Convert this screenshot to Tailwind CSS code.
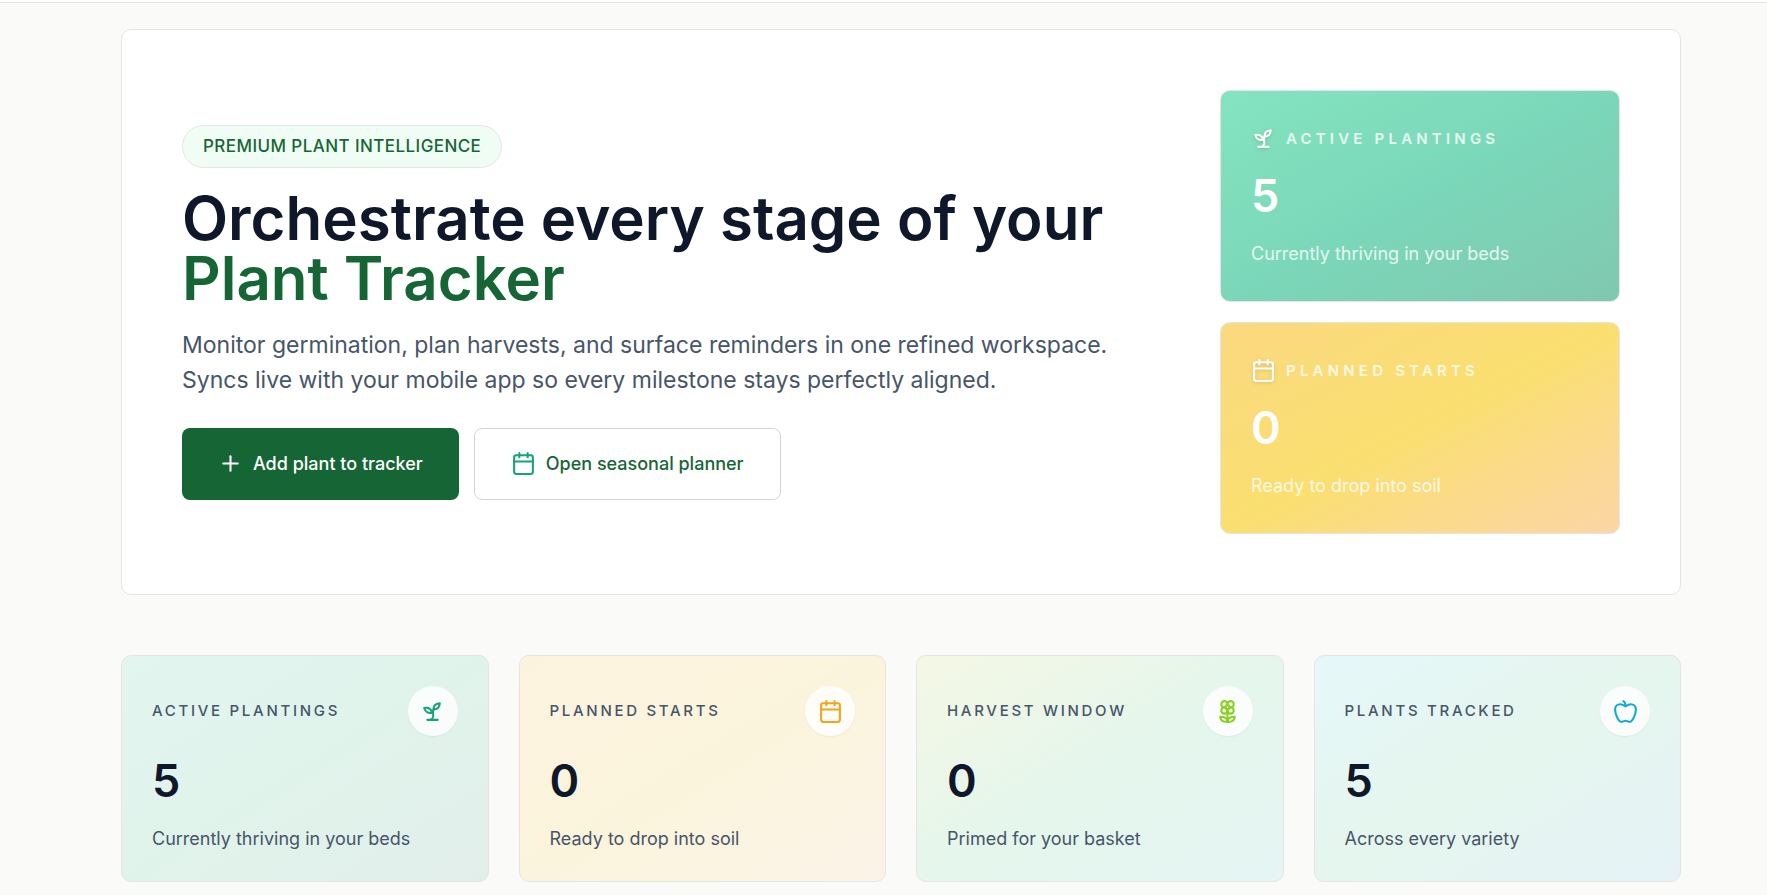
<!DOCTYPE html>
<html lang="en">
<head>
    <meta charset="UTF-8">
    <meta name="viewport" content="width=device-width, initial-scale=1.0">
    <title>Plant Tracker</title>
    <script src="https://cdn.jsdelivr.net/npm/@tailwindcss/browser@4"></script>
</head>
<body class="bg-[#fafaf9] font-['Inter',sans-serif] text-[#0f172a]">
    <!-- Shared icons -->
    <svg class="hidden" aria-hidden="true">
        <symbol id="icon-sprout" viewBox="0 0 24 24">
            <path d="M7 20h10"/>
            <path d="M10 20c5.5-2.5.8-6.4 3-10"/>
            <path d="M9.5 9.4c1.1.8 1.8 2.2 2.3 3.7-2 .4-3.5.4-4.8-.3-1.2-.6-2.3-1.9-3-4.2 2.8-.5 4.4 0 5.5.8z"/>
            <path d="M14.1 6a7 7 0 0 0-1.1 4c1.9-.1 3.3-.6 4.3-1.4 1-1 1.6-2.3 1.7-4.6-2.7.1-4 1-4.9 2z"/>
        </symbol>
        <symbol id="icon-calendar" viewBox="0 0 24 24">
            <path d="M8 2v4"/>
            <path d="M16 2v4"/>
            <rect width="18" height="18" x="3" y="4" rx="2"/>
            <path d="M3 10h18"/>
        </symbol>
        <symbol id="icon-flower" viewBox="0 0 24 24">
            <path d="M12 5a3 3 0 1 1 3 3m-3-3a3 3 0 1 0-3 3m3-3v1M9 8a3 3 0 1 0 3 3M9 8h1m5 0a3 3 0 1 1-3 3m3-3h-1m-2 3v-1"/>
            <circle cx="12" cy="8" r="2"/>
            <path d="M12 10v12"/>
            <path d="M12 22c4.2 0 7-1.667 7-5-4.2 0-7 1.667-7 5Z"/>
            <path d="M12 22c-4.2 0-7-1.667-7-5 4.2 0 7 1.667 7 5Z"/>
        </symbol>
        <symbol id="icon-apple" viewBox="0 0 24 24">
            <path d="M12 20.94c1.5 0 2.75 1.06 4 1.06 3 0 6-8 6-12.22A4.91 4.91 0 0 0 17 5c-2.22 0-4 1.44-5 2-1-.56-2.78-2-5-2a4.9 4.9 0 0 0-5 4.78C2 14 5 22 8 22c1.25 0 2.5-1.06 4-1.06Z"/>
            <path d="M10 2c1 .5 2 2 2 5"/>
        </symbol>
        <symbol id="icon-plus" viewBox="0 0 24 24">
            <path d="M5 12h14"/>
            <path d="M12 5v14"/>
        </symbol>
    </svg>

    <header class="h-[3px] border-b border-neutral-200 bg-white"></header>

    <main class="pt-[26px] pr-[86px] pb-3 pl-[121px]">
        <!-- Hero -->
        <section class="flex items-center justify-between gap-10 rounded-[10px] border border-neutral-200 bg-white p-[60px]">
            <div>
                <span class="inline-flex items-center rounded-full border border-neutral-200 bg-green-50 px-5 py-2 text-[17px] leading-[25px] font-medium tracking-wide text-[#166534] uppercase">Premium plant intelligence</span>
                <h1 class="mt-5 text-[60px] leading-[60px] font-semibold">
                    Orchestrate every stage of your
                    <span class="block text-[#166534]">Plant Tracker</span>
                </h1>
                <p class="mt-5 max-w-[960px] text-[23px] leading-[35px] text-[#475569]">Monitor germination, plan harvests, and surface reminders in one refined workspace. Syncs live with your mobile app so every milestone stays perfectly aligned.</p>
                <div class="mt-[30px] flex flex-wrap gap-[15px]">
                    <button type="button" class="flex h-[72px] items-center gap-[10px] rounded-lg bg-[#166534] px-9 text-[18px] font-medium text-white">
                        <svg class="size-[25px] fill-none stroke-current stroke-2" stroke-linecap="round" stroke-linejoin="round"><use href="#icon-plus"/></svg>
                        Add plant to tracker
                    </button>
                    <button type="button" class="flex h-[72px] items-center gap-[10px] rounded-lg border border-neutral-300 bg-white px-9 text-[18px] font-medium text-[#166534]">
                        <svg class="size-[25px] fill-none stroke-[#16a37b] stroke-2" stroke-linecap="round" stroke-linejoin="round"><use href="#icon-calendar"/></svg>
                        Open seasonal planner
                    </button>
                </div>
            </div>

            <div class="grid w-[400px] shrink-0 gap-5">
                <article class="rounded-[10px] border border-neutral-200 bg-linear-to-br from-[#84e4c0] via-[#7bd7b9] to-[#80c8b0] px-[30px] py-[35px]">
                    <div class="flex items-center gap-[10px]">
                        <svg class="size-[25px] fill-none stroke-white stroke-2 drop-shadow" stroke-linecap="round" stroke-linejoin="round"><use href="#icon-sprout"/></svg>
                        <h2 class="text-[15px] leading-[25px] font-semibold tracking-[0.28em] text-white/80 uppercase">Active plantings</h2>
                    </div>
                    <p class="mt-5 text-[45px] leading-[50px] font-semibold text-white">5</p>
                    <p class="mt-5 text-[18px] leading-[25px] text-white/80">Currently thriving in your beds</p>
                </article>
                <article class="rounded-[10px] border border-neutral-200 bg-linear-to-br from-[#fbd980] via-[#fadf70] to-[#fcd5a5] px-[30px] py-[35px]">
                    <div class="flex items-center gap-[10px]">
                        <svg class="size-[25px] fill-none stroke-white stroke-2 drop-shadow" stroke-linecap="round" stroke-linejoin="round"><use href="#icon-calendar"/></svg>
                        <h2 class="text-[15px] leading-[25px] font-semibold tracking-[0.28em] text-white/80 uppercase">Planned starts</h2>
                    </div>
                    <p class="mt-5 text-[45px] leading-[50px] font-semibold text-white">0</p>
                    <p class="mt-5 text-[18px] leading-[25px] text-white/80">Ready to drop into soil</p>
                </article>
            </div>
        </section>

        <!-- Stats -->
        <section class="mt-[60px] grid grid-cols-4 gap-[30px]">
            <article class="rounded-[10px] border border-neutral-200 bg-linear-to-br from-[#e2f5ef] via-[#e0f3eb] to-[#e2eeea] p-[30px]">
                <div class="flex items-center justify-between">
                    <h2 class="text-[15px] font-medium tracking-[0.18em] text-[#475569] uppercase">Active plantings</h2>
                    <span class="flex size-[50px] items-center justify-center rounded-full bg-white/80 shadow-xs">
                        <svg class="size-[25px] fill-none stroke-[#16a37b] stroke-2" stroke-linecap="round" stroke-linejoin="round"><use href="#icon-sprout"/></svg>
                    </span>
                </div>
                <p class="mt-5 text-[45px] leading-[50px] font-semibold">5</p>
                <p class="mt-5 text-[18px] leading-[25px] text-[#475569]">Currently thriving in your beds</p>
            </article>
            <article class="rounded-[10px] border border-neutral-200 bg-linear-to-br from-[#fcf3df] via-[#fbf4dc] to-[#fbf3e8] p-[30px]">
                <div class="flex items-center justify-between">
                    <h2 class="text-[15px] font-medium tracking-[0.18em] text-[#475569] uppercase">Planned starts</h2>
                    <span class="flex size-[50px] items-center justify-center rounded-full bg-white/80 shadow-xs">
                        <svg class="size-[25px] fill-none stroke-[#f2a51a] stroke-2" stroke-linecap="round" stroke-linejoin="round"><use href="#icon-calendar"/></svg>
                    </span>
                </div>
                <p class="mt-5 text-[45px] leading-[50px] font-semibold">0</p>
                <p class="mt-5 text-[18px] leading-[25px] text-[#475569]">Ready to drop into soil</p>
            </article>
            <article class="rounded-[10px] border border-neutral-200 bg-linear-to-br from-[#f4f7e4] via-[#e5f6ec] to-[#e5f5f4] p-[30px]">
                <div class="flex items-center justify-between">
                    <h2 class="text-[15px] font-medium tracking-[0.18em] text-[#475569] uppercase">Harvest window</h2>
                    <span class="flex size-[50px] items-center justify-center rounded-full bg-white/80 shadow-xs">
                        <svg class="size-[25px] fill-none stroke-[#89d020] stroke-2" stroke-linecap="round" stroke-linejoin="round"><use href="#icon-flower"/></svg>
                    </span>
                </div>
                <p class="mt-5 text-[45px] leading-[50px] font-semibold">0</p>
                <p class="mt-5 text-[18px] leading-[25px] text-[#475569]">Primed for your basket</p>
            </article>
            <article class="rounded-[10px] border border-neutral-200 bg-linear-to-br from-[#e5f7f9] via-[#e5f6ee] to-[#e6f2f7] p-[30px]">
                <div class="flex items-center justify-between">
                    <h2 class="text-[15px] font-medium tracking-[0.18em] text-[#475569] uppercase">Plants tracked</h2>
                    <span class="flex size-[50px] items-center justify-center rounded-full bg-white/80 shadow-xs">
                        <svg class="size-[25px] fill-none stroke-[#12a9d2] stroke-2" stroke-linecap="round" stroke-linejoin="round"><use href="#icon-apple"/></svg>
                    </span>
                </div>
                <p class="mt-5 text-[45px] leading-[50px] font-semibold">5</p>
                <p class="mt-5 text-[18px] leading-[25px] text-[#475569]">Across every variety</p>
            </article>
        </section>
    </main>
</body>
</html>
